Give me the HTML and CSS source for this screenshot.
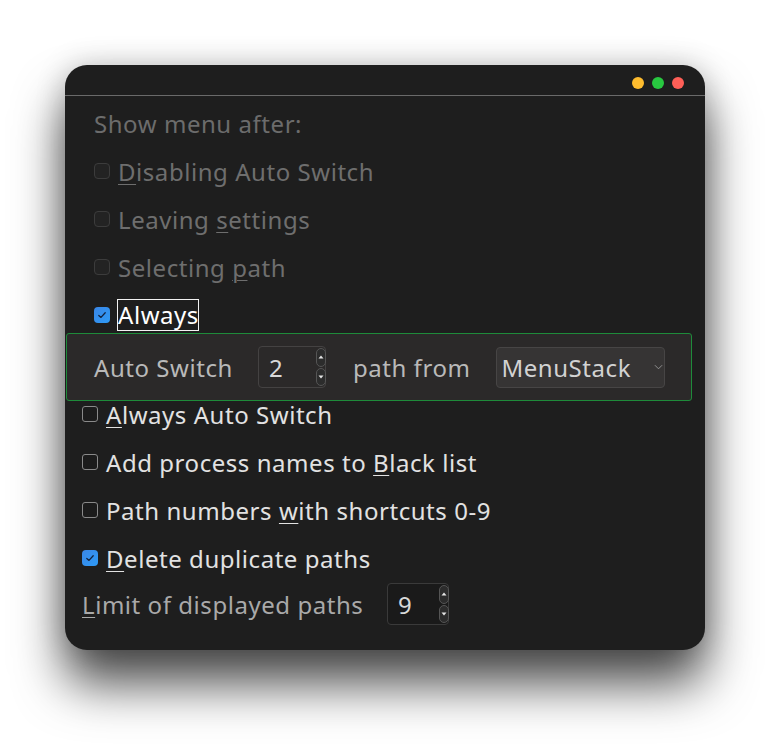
FILE: index.html
```html
<!DOCTYPE html>
<html>
<head>
<meta charset="utf-8">
<link rel="stylesheet" href="styles.css">
</head>
<body>
<div class="window">
  <div class="titlebar">
    <span class="dot yellow"></span>
    <span class="dot green"></span>
    <span class="dot red"></span>
  </div>
  <div class="upper">
    <div class="row heading">Show menu after:</div>
    <div class="row disabled"><span class="cb cb-disabled"></span><span><u>D</u>isabling Auto Switch</span></div>
    <div class="row disabled"><span class="cb cb-disabled"></span><span>Leaving <u>s</u>ettings</span></div>
    <div class="row disabled"><span class="cb cb-disabled"></span><span>Selecting <u>p</u>ath</span></div>
    <div class="row always"><span class="cb cb-checked"><svg viewBox="0 0 16 16" width="16" height="16"><path d="M4.8 8.4 L7 10.4 L11.2 5.8" fill="none" stroke="#13233f" stroke-width="1.3" stroke-linecap="round" stroke-linejoin="round"/></svg></span><span class="focus">Always</span></div>
  </div>
  <div class="group">
    <span class="glabel">Auto Switch</span>
    <div class="spin spin-2">
      <span class="spin-val">2</span>
      <span class="spin-btns">
        <span class="sbtn"><svg viewBox="0 0 8 8" width="8" height="8"><path d="M1.5 5.5 L4 2.5 L6.5 5.5 Z" fill="#e6e6e6"/></svg></span>
        <span class="sbtn"><svg viewBox="0 0 8 8" width="8" height="8"><path d="M1.5 2.5 L4 5.5 L6.5 2.5 Z" fill="#e6e6e6"/></svg></span>
      </span>
    </div>
    <span class="glabel from">path from</span>
    <div class="combo">
      <span class="combo-val">MenuStack</span>
      <svg class="chev" viewBox="0 0 10 6" width="9" height="6"><path d="M1 1 L5 5 L9 1" fill="none" stroke="#9a9a9a" stroke-width="1"/></svg>
    </div>
  </div>
  <div class="lower">
    <div class="row"><span class="cb cb-empty"></span><span><u>A</u>lways Auto Switch</span></div>
    <div class="row"><span class="cb cb-empty"></span><span>Add process names to <u>B</u>lack list</span></div>
    <div class="row"><span class="cb cb-empty"></span><span>Path numbers <u>w</u>ith shortcuts 0-9</span></div>
    <div class="row"><span class="cb cb-checked"><svg viewBox="0 0 16 16" width="16" height="16"><path d="M4.8 8.4 L7 10.4 L11.2 5.8" fill="none" stroke="#13233f" stroke-width="1.3" stroke-linecap="round" stroke-linejoin="round"/></svg></span><span><u>D</u>elete duplicate paths</span></div>
    <div class="row limit">
      <span class="limit-label"><u>L</u>imit of displayed paths</span>
      <div class="spin spin-9">
        <span class="spin-val">9</span>
        <span class="spin-btns">
          <span class="sbtn"><svg viewBox="0 0 8 8" width="8" height="8"><path d="M1.5 5.5 L4 2.5 L6.5 5.5 Z" fill="#e6e6e6"/></svg></span>
          <span class="sbtn"><svg viewBox="0 0 8 8" width="8" height="8"><path d="M1.5 2.5 L4 5.5 L6.5 2.5 Z" fill="#e6e6e6"/></svg></span>
        </span>
      </div>
    </div>
  </div>
</div>
</body>
</html>
```

FILE: styles.css
```css
html, body {
  margin: 0;
  padding: 0;
  background: #ffffff;
}
body {
  padding: 65px 0 0 65px;
  min-height: 746px;
  box-sizing: border-box;
  font-family: "Noto Sans", "DejaVu Sans", sans-serif;
  font-size: 24px;
  letter-spacing: 0.55px;
}
.window {
  width: 640px;
  height: 585px;
  border-radius: 22px;
  background: #1e1e1e;
  box-shadow: 0 34px 50px rgba(0, 0, 0, 0.7), 0 0 30px rgba(0, 0, 0, 0.2);
  overflow: hidden;
  box-sizing: border-box;
}
.titlebar {
  border-bottom: 1px solid #6a6a6a;
  display: flex;
  justify-content: flex-end;
  align-items: center;
  gap: 8px;
  padding: 6px 21px 0 0;
  box-sizing: content-box;
  height: 24px;
}
.dot {
  width: 12px;
  height: 12px;
  border-radius: 50%;
}
.yellow { background: #febc2e; }
.green { background: #28c840; }
.red { background: #ff5f57; }

.upper {
  padding: 15px 0 0 29px;
}
.row {
  height: 24px;
  margin-bottom: 24px;
  display: flex;
  align-items: center;
  gap: 8px;
  white-space: nowrap;
}
u {
  text-decoration: underline;
  text-underline-offset: 3px;
  text-decoration-thickness: 1px;
}
.heading { color: #6c6c6c; }
.disabled { color: #6e6e6e; }
.always {
  height: 32px;
  margin-top: -4px;
  margin-bottom: 0;
  gap: 7px;
  color: #ffffff;
}
.focus {
  border: 1px solid #f2f2f2;
  height: 30px;
  line-height: 30px;
  width: 80px;
  box-sizing: content-box;
}
.cb {
  width: 16px;
  height: 16px;
  box-sizing: border-box;
  border-radius: 4px;
  flex: none;
  display: inline-flex;
}
.cb-disabled {
  border: 1px solid #3c3c3c;
  background: #232323;
}
.cb-empty {
  border: 1px solid #8a8a8a;
  background: #1c1c1c;
  border-radius: 3px;
}
.cb-checked {
  background: linear-gradient(135deg, #3a86e6, #2e9bf7);
  border: none;
}

.group {
  margin: 2px 13px 0 1px;
  height: 68px;
  box-sizing: border-box;
  border: 1px solid #1e8b3a;
  border-radius: 3px;
  background: #2b2929;
  display: flex;
  align-items: center;
  padding: 0 0 0 27px;
  color: #b9b9b9;
}
.glabel { white-space: nowrap; }
.spin {
  display: flex;
  align-items: center;
  border: 1px solid #444242;
  border-radius: 4px;
  box-sizing: border-box;
  height: 42px;
}
.spin-2 {
  width: 68px;
  margin-left: 25px;
  margin-right: 27px;
}
.spin-val {
  flex: 1;
  padding-left: 10px;
  color: #d8d8d8;
}
.spin-btns {
  display: flex;
  flex-direction: column;
  gap: 1px;
  width: 10px;
  margin-right: -1px;
  height: 38px;
}
.sbtn {
  flex: 1;
  border: 1px solid #555;
  border-radius: 5px;
  background: #2c2c2c;
  display: flex;
  align-items: center;
  justify-content: center;
  box-sizing: border-box;
  overflow: hidden;
}
.sbtn svg { flex: none; }
.combo {
  margin-left: 26px;
  width: 169px;
  height: 41px;
  box-sizing: border-box;
  border: 1px solid #474545;
  border-radius: 4px;
  background: #363434;
  display: flex;
  align-items: center;
  padding: 0 1px 0 4px;
  color: #d2d2d2;
}
.combo-val { flex: 1; }
.chev { flex: none; }

.lower {
  padding: 1px 0 0 17px;
  color: #e2e2e2;
}
.limit {
  height: 42px;
  margin-top: -11px;
  margin-bottom: 0;
  gap: 0;
  color: #a9a9a9;
}
.limit-label { width: 305px; }
.spin-9 {
  width: 62px;
  background: #1a1a1a;
  border-color: #3a3a3a;
}
```
